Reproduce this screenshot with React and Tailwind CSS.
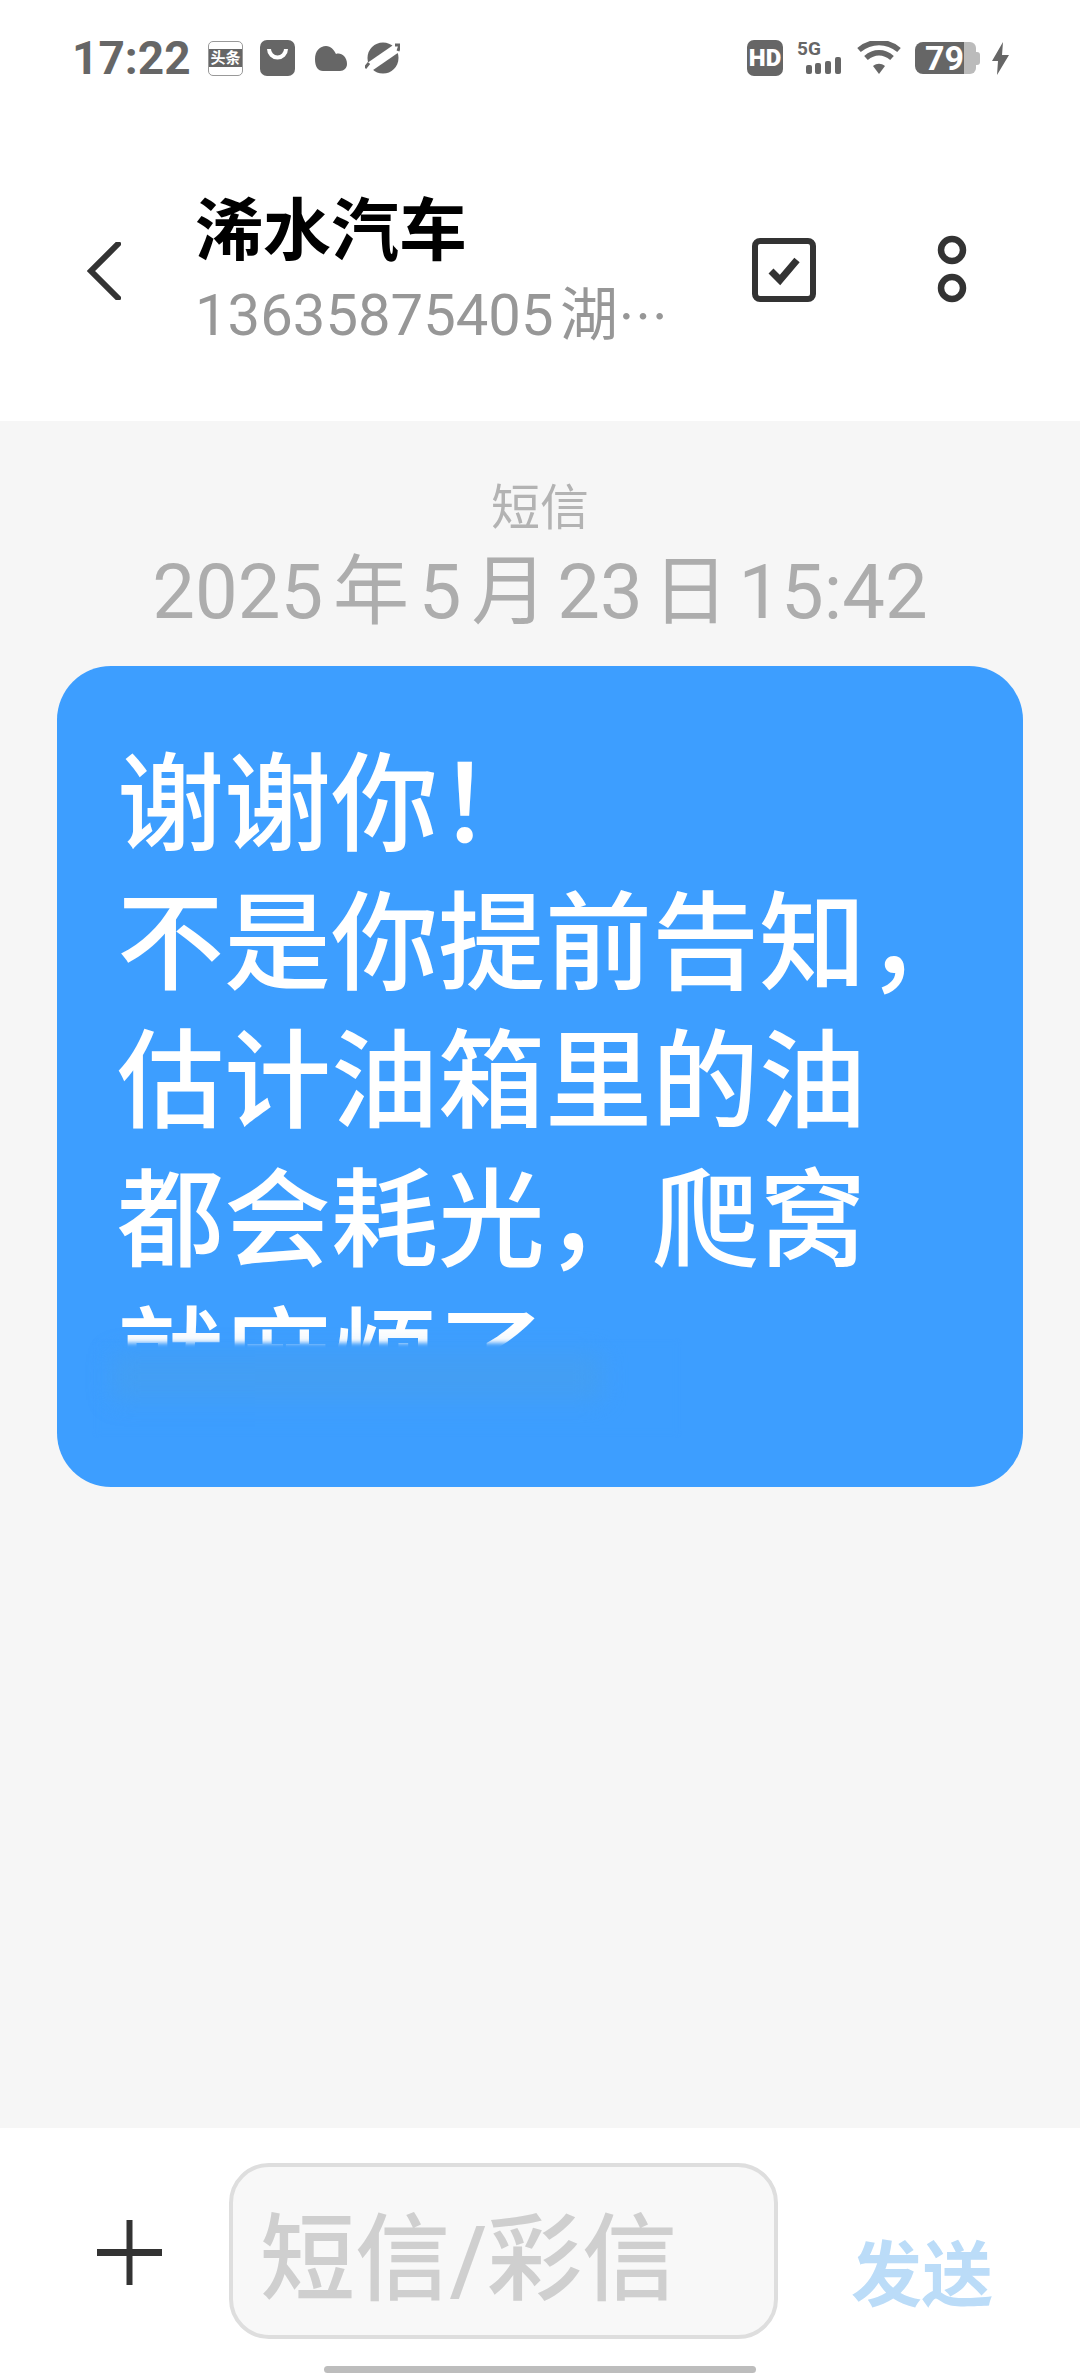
import React from "react";

const cjk = { fontFamily: "Roboto, 'Noto Sans CJK SC', sans-serif" };

function StatusBar() {
  return (
    <div className="h-[118px] flex items-start justify-between pl-[72px] pr-[71px] pt-[38px]">
      <div className="flex items-center h-[40px]">
        <span className="text-[46px] leading-[40px] font-bold text-[#666] w-[136px]">17:22</span>
        {/* toutiao */}
        <div className="w-[35px] h-[35px] rounded-[5px] border border-[#999] bg-white flex items-center justify-center overflow-hidden">
          <div className="w-full h-[18px] bg-[#666] text-white text-[15px] leading-[18px] font-bold text-center whitespace-nowrap">头条</div>
        </div>
        <svg className="ml-[17px]" width="35" height="36" viewBox="0 0 35 36">
          <rect width="35" height="36" rx="7" fill="#666" />
          <path d="M9 9a8.500 8.500 0 0 0 17 0" fill="none" stroke="#fff" strokeWidth="4" />
        </svg>
        <svg className="ml-[20px]" width="32" height="25" viewBox="0 0 32 25">
          <path d="M8 25C3 25 0 21 0 13 0 5 5 0 11 0c5 0 8 4 10 8 3-1 6 0 8 2 2 2 3 5 3 8 0 4-3 7-7 7z" fill="#666" />
        </svg>
        <svg className="ml-[18px]" width="35" height="32" viewBox="0 0 35 32">
          <circle cx="18" cy="16" r="15.500" fill="#666" />
          <path d="M3 26L32 6" stroke="#fff" strokeWidth="9" />
          <path d="M0 26l4-5M30 3h5l-2 6" stroke="#666" strokeWidth="3" fill="none" />
        </svg>
      </div>
      <div className="flex items-center h-[40px]">
        <div className="w-[36px] h-[36px] rounded-[7px] bg-[#666] text-white text-[24px] leading-[36px] font-black text-center">HD</div>
        <div className="ml-[14px] w-[46px] h-[34px] flex flex-col">
          <span className="text-[19px] leading-[16px] font-bold text-[#666]">5G</span>
          <svg className="ml-[9px]" width="36" height="17" viewBox="0 0 36 17">
            <rect x="0" y="8" width="6" height="9" rx="2" fill="#666" />
            <rect x="9" y="6" width="6" height="11" rx="2" fill="#666" />
            <rect x="19" y="4" width="6" height="13" rx="2" fill="#666" />
            <rect x="29" y="0" width="6" height="17" rx="2" fill="#666" />
          </svg>
        </div>
        <svg className="ml-[14px]" width="44" height="34" viewBox="0 0 44 34">
          <path d="M2 9C14-1 30-1 42 9" fill="none" stroke="#666" strokeWidth="5.500" />
          <path d="M9 17c8-7 18-7 26 0" fill="none" stroke="#666" strokeWidth="5.500" />
          <path d="M16 25c4-3 8-3 12 0l-6 8z" fill="#666" />
        </svg>
        <div className="ml-[14px] w-[65px] h-[32px] flex items-center">
          <div className="w-[49px] h-[32px] rounded-l-[8px] bg-[#666] text-white text-[34px] leading-[32px] font-bold text-right">79</div>
          <div className="w-[12px] h-[32px] rounded-r-[6px] bg-[#bbb]" />
          <div className="w-[4px] h-[13px] rounded-r-[3px] bg-[#bbb]" />
        </div>
        <svg className="ml-[12px]" width="17" height="33" viewBox="0 0 17 33">
          <path d="M11 0L0 19h6L5 33 17 13h-7z" fill="#666" />
        </svg>
      </div>
    </div>
  );
}

function Header() {
  return (
    <div className="h-[303px] flex items-start pl-[87px]">
      <svg className="mt-[124px] shrink-0" width="34" height="58" viewBox="0 0 34 58">
        <path d="M31 2L4 29l27 27" fill="none" stroke="#333" strokeWidth="6" strokeLinecap="round" />
      </svg>
      <div className="ml-[74px] w-[482px] pt-[76px]">
        <div className="text-[68px] leading-[76px] font-bold text-black">浠水汽车</div>
        <div className="mt-[11px] text-[58px] leading-[68px] text-[#979797] whitespace-nowrap [word-spacing:-8px] overflow-hidden">
          13635875405 湖<span className="text-[50px]">⋯</span>
        </div>
      </div>
      <svg className="ml-[75px] mt-[120px] shrink-0" width="64" height="64" viewBox="0 0 64 64">
        <rect x="3" y="3" width="58" height="58" rx="5" fill="none" stroke="#333" strokeWidth="6" />
        <path d="M19 33l9 9 17-20" fill="none" stroke="#333" strokeWidth="7" />
      </svg>
      <svg className="ml-[121px] mt-[117px] shrink-0" width="30" height="68" viewBox="0 0 30 68">
        <circle cx="15" cy="15" r="11" fill="none" stroke="#333" strokeWidth="6.500" />
        <circle cx="15" cy="53" r="11" fill="none" stroke="#333" strokeWidth="6.500" />
      </svg>
    </div>
  );
}

function Bubble() {
  return (
    <div className="relative mt-[29px] mx-[57px] h-[821px] rounded-[54px] bg-[#3d9eff] overflow-hidden pl-[60px] pt-[71px]">
      <div className="text-[107px] leading-[138.500px] font-medium text-white whitespace-nowrap">
        <div>谢谢你！</div>
        <div>不是你提前告知，</div>
        <div>估计油箱里的油</div>
        <div>都会耗光，爬窝</div>
        <div>就麻烦了</div>
      </div>
      {/* blurred out strip over the last line */}
      <div className="absolute left-[40px] top-[677px] w-[580px] h-[90px] bg-[#3d9eff] blur-[2px]" />
      <div className="absolute left-[55px] top-[688px] w-[490px] h-[46px] bg-[#469fef] opacity-70 blur-[12px]" />
    </div>
  );
}

function Footer() {
  return (
    <div className="relative h-[248px] bg-white flex items-start pt-[35px]">
      <svg className="ml-[97px] mt-[57px] shrink-0" width="65" height="65" viewBox="0 0 65 65">
        <path d="M32.500 0v65" stroke="#333" strokeWidth="6" />
        <path d="M0 32.500h65" stroke="#333" strokeWidth="7" />
      </svg>
      <div className="ml-[67px] w-[549px] h-[176px] rounded-[40px] border-[4px] border-[#dedede] bg-[#f8f8f8] pl-[27px] pt-[24px] text-[95px] leading-[140px] font-medium text-[#cfcfcf] whitespace-nowrap">
        短信/彩信
      </div>
      <div className="ml-[73px] mt-[75px] text-[71px] leading-[76px] font-bold text-[#bbdcf8] whitespace-nowrap">发送</div>
      <div className="absolute left-[324px] bottom-[3px] w-[432px] h-[7px] rounded-full bg-[#bdbdbd]" />
    </div>
  );
}

export default function App() {
  return (
    <div className="w-[1080px] h-[2376px] overflow-hidden bg-white flex flex-col" style={cjk}>
      <StatusBar />
      <Header />
      <div className="flex-1 bg-[#f6f6f6]">
        <div className="pt-[56px] text-center text-[49px] leading-[64px] text-[#b3b3b3]">短信</div>
        <div className="mt-[6px] text-center text-[76px] leading-[90px] text-[#adadad] whitespace-nowrap [word-spacing:-9px]">2025 年 5 月 23 日 15:42</div>
        <Bubble />
      </div>
      <Footer />
    </div>
  );
}
